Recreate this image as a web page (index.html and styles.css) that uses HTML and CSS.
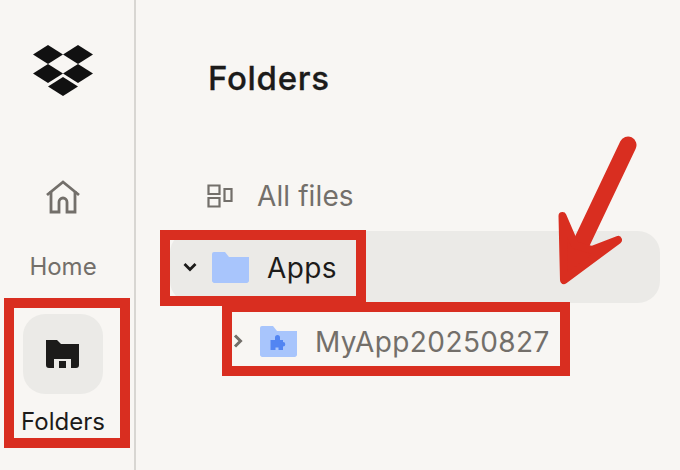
FILE: index.html
```html
<!DOCTYPE html>
<html lang="en">
<head>
<meta charset="utf-8">
<title>Folders</title>
<link rel="stylesheet" href="styles.css">
</head>
<body>
<div class="app">
  <nav class="rail">
    <svg class="logo" viewBox="0 0 62 52" width="62" height="52" aria-label="Dropbox">
      <polygon fill="#111" points="0,9.500 15,0 30,9.500 15,19"/>
      <polygon fill="#111" points="30,9.500 45,0 60,9.500 45,19"/>
      <polygon fill="#111" points="0,28.500 15,19 30,28.500 15,38"/>
      <polygon fill="#111" points="30,28.500 45,19 60,28.500 45,38"/>
      <polygon fill="#111" points="15,41.500 30,32 45,41.500 30,51"/>
    </svg>
    <svg class="home-icon" viewBox="0 0 34 34" width="34" height="34">
      <path d="M1 15 17 2 33 15" fill="none" stroke="#736f6a" stroke-width="2.800"/>
      <path d="M5 11V32H13V22A4 4 0 0 1 21 22V32H29V11" fill="none" stroke="#736f6a" stroke-width="2.800"/>
    </svg>
    <span class="rail-label">Home</span>
    <div class="rail-btn">
      <svg viewBox="0 0 34 28" width="34" height="28">
        <path fill="#1c1b1a" d="M0 0H11L15 4H33V25A3 3 0 0 1 30 28H25V19H8V28H3A3 3 0 0 1 0 25Z"/>
        <rect fill="#1c1b1a" x="13" y="21" width="7" height="7"/>
      </svg>
    </div>
    <span class="rail-label active">Folders</span>
  </nav>
  <main class="panel">
    <h1 class="title">Folders</h1>
    <div class="all-files">
      <svg viewBox="0 0 26 24" width="26" height="24">
        <path fill="none" stroke="#736f6a" stroke-width="2.200" d="M1.500 1.500H12.500V10H1.500ZM1.500 14H12.500V22.500H1.500ZM17.500 5H24.500V17H17.500Z"/>
      </svg>
      <span>All files</span>
    </div>
    <div class="row selected">
      <svg class="chev" viewBox="0 0 14 10" width="14" height="10"><path d="M1.500 2 7 7.500 12.500 2" fill="none" stroke="#1c1b1a" stroke-width="2.800"/></svg>
      <svg class="folder" viewBox="0 0 37 31" width="37" height="31">
        <path fill="#a8c5fc" d="M0 2A2 2 0 0 1 2 0H13L17 5H37V28A2.500 2.500 0 0 1 34.500 31H2.500A2.500 2.500 0 0 1 0 28Z"/>
      </svg>
      <span class="name">Apps</span>
    </div>
    <div class="row child">
      <svg class="chev-r" viewBox="0 0 10 14" width="10" height="14"><path d="M2 1.500 7.500 7 2 12.500" fill="none" stroke="#736f6a" stroke-width="3"/></svg>
      <svg class="folder" viewBox="0 0 37 31" width="37" height="31">
        <path fill="#a8c5fc" d="M0 2A2 2 0 0 1 2 0H13L17 5H37V28A2.500 2.500 0 0 1 34.500 31H2.500A2.500 2.500 0 0 1 0 28Z"/>
        <path fill="#5285f2" d="M10.500 14H15V11.500A2.500 2.500 0 0 1 20 11.500V14H23V16A2.300 2.300 0 0 1 23 20.600V24H18.500V21.500H15.500V24H10.500Z"/>
      </svg>
      <span class="name muted">MyApp20250827</span>
    </div>
  </main>
</div>
<div class="mark mark-folders"></div>
<div class="mark mark-apps"></div>
<div class="mark mark-myapp"></div>
<svg class="arrow" viewBox="0 0 680 470" width="680" height="470">
  <path d="M628 145 580 246" fill="none" stroke="#d92e20" stroke-width="17" stroke-linecap="round"/>
  <path d="M562.500 216 575 245 592 250 618 240 564 280Z" fill="#d92e20" stroke="#d92e20" stroke-width="8" stroke-linejoin="round"/>
</svg>
</body>
</html>
```
FILE: styles.css
```css
* { box-sizing: border-box; }
html, body { margin: 0; height: 100%; overflow: hidden; }
body {
  background: #f8f6f3;
  font-family: Inter, "Liberation Sans", sans-serif;
  color: #1c1b1a;
  position: relative;
}
.app { display: flex; height: 470px; }
.rail {
  width: 136px;
  flex: none;
  border-right: 2px solid #d8d6d2;
  display: flex;
  flex-direction: column;
  align-items: center;
  padding: 45px 8px 0 0;
}
.logo { margin-left: 2px; }
.home-icon { margin-top: 83px; }
.rail-label { font-size: 24px; line-height: 30px; color: #736f6a; margin-top: 38px; }
.rail-btn {
  width: 80px;
  height: 80px;
  margin-top: 32px;
  border-radius: 22px;
  background: #ebeae7;
  display: flex;
  align-items: center;
  justify-content: center;
}
.rail-label.active { color: #1c1b1a; margin-top: 13px; }
.panel { flex: 1; padding: 58px 20px 0 34px; }
.title { margin: 0 0 0 38px; font-size: 33px; line-height: 40px; font-weight: 500; letter-spacing: 0.7px; -webkit-text-stroke: 0.3px #1c1b1a; }
.all-files {
  display: flex;
  align-items: center;
  margin: 81px 0 0 37px;
  height: 34px;
  font-size: 28px;
  letter-spacing: 0.1px;
  color: #736f6a;
}
.all-files span { margin-left: 24px; }
.row { display: flex; align-items: center; height: 72px; font-size: 28px; }
.selected {
  margin-top: 18px;
  background: #ebeae7;
  border-radius: 22px;
  padding-left: 13px;
}
.folder { flex: none; }
.chev { margin-right: 15px; }
.name { padding-top: 2px; letter-spacing: 0.4px; }
.selected .name { margin-left: 18px; }
.child { padding-left: 63px; margin-top: 2px; }
.chev-r { margin-right: 17px; }
.child .name { margin-left: 18px; }
.muted { color: #736f6a; }
.mark { position: absolute; border: 10px solid #d92e20; }
.mark-folders { left: 4px; top: 298px; width: 126px; height: 150px; }
.mark-apps { left: 160px; top: 230px; width: 206px; height: 76px; }
.mark-myapp { left: 222px; top: 302px; width: 348px; height: 74px; }
.arrow { position: absolute; left: 0; top: 0; }
```
